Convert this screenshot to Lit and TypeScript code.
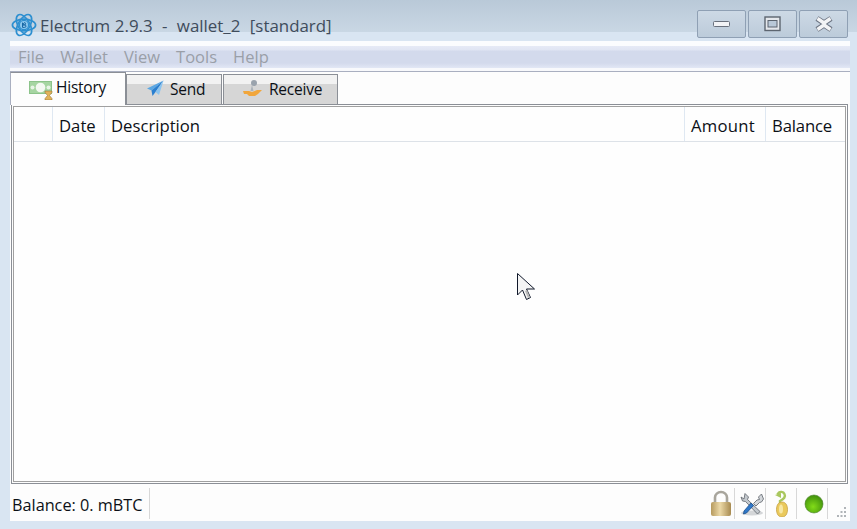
import { LitElement, html, css } from "lit";
import { customElement } from "lit/decorators.js";

@customElement("app-root")
export class AppRoot extends LitElement {
  static styles = css`
    :host { display: block; width: 857px; height: 529px; position: relative; overflow: hidden;
      font-family: "Open Sans", "Noto Sans", sans-serif; font-size: 15.5px; color: #0c1016; background: #d9e5f2; }
    .title { height: 41px; box-sizing: border-box; padding: 10px 9px 0 11px; display: flex; align-items: flex-start;
      background: linear-gradient(#b9c9d8 0, #c9d7e4 32px, #d9e5f2 32px); }
    .logo { width: 26px; height: 26px; margin-top: 2px; flex: none; }
    .caption { margin-left: 3px; margin-top: 5px; font-size: 16.9px; line-height: 22px; color: #3f4c5c; white-space: pre; word-spacing: .3px; }
    .winbtns { margin-left: auto; display: flex; gap: 2px; }
    .wb { width: 49px; height: 28px; box-sizing: border-box; border: 1px solid #8fa0b4; border-radius: 2px;
      background: linear-gradient(#cdd9e5, #bccbda); display: flex; align-items: center; justify-content: center; }
    .frame { height: 488px; box-sizing: border-box; padding: 0 7px 8px 10px; }
    .window { height: 100%; background: #fdfdfd; display: flex; flex-direction: column; }
    .menubar { height: 31px; flex: none; box-sizing: border-box; border-bottom: 1px solid #a9afc0;
      background: linear-gradient(#fbfcfe 0, #fbfcfe 5px, #e6eaf6 5px, #e0e5f3 9px, #d3daec 10px, #d3daec 22px, #e2e7f5 27px, #f8f9fc 27px);
      display: flex; gap: 16px; padding: 2px 0 0 8px; color: #9a9fa8; font-size: 16.5px; line-height: 27px; }
    .tabs { height: 32px; flex: none; display: flex; align-items: flex-end; letter-spacing: -.22px; }
    .tab { box-sizing: border-box; height: 30px; padding-bottom: 2px; display: flex; align-items: center; border: 1px solid #8b8f96;
      border-bottom: none; background: linear-gradient(#f2f2f2 0, #f2f2f2 9px, #d6d6d6 9px); white-space: nowrap; }
    .tab.active { height: 33px; width: 116px; background: #fdfdfd; border-left-color: #a9afc0;
      padding-left: 17px; padding-bottom: 4px; margin-bottom: -1px; position: relative; z-index: 1; }
    .tab.send { width: 96px; padding-left: 20px; margin-right: 1px; }
    .tab.receive { width: 115px; padding-left: 18px; }
    .tab svg { flex: none; }
    .i-hist { margin-right: 2px; margin-top: 5px; }
    .i-send { margin-right: 6px; }
    .i-recv { margin-right: 5px; }
    .pane { margin-left: 1px; margin-right: 2px; flex: none; height: 380px; box-sizing: border-box;
      border: 1px solid #8b8f96; padding: 1px; }
    .inner { height: 100%; box-sizing: border-box; border: 1px solid #a0a0a0; background: #fefefe; }
    .head { height: 35px; box-sizing: border-box; border-bottom: 1px solid #dde2e8; display: flex; font-size: 16.7px; }
    .col { box-sizing: border-box; padding: 5px 0 0 6px; border-right: 1px solid #dfe8f2; line-height: 28px; white-space: nowrap; }
    .c0 { width: 39px; }
    .c1 { width: 52px; }
    .c2 { width: 580px; }
    .c3 { width: 81px; letter-spacing: .25px; }
    .c4 { border: none; letter-spacing: -.15px; }
    .status { flex: 1; display: flex; align-items: flex-start; padding: 4px 0 0 2px; font-size: 16.25px; }
    .bal { width: 138px; height: 31px; line-height: 34px; border-right: 1px solid #d8d8d8; white-space: nowrap; box-sizing: border-box; }
    .icons { margin-left: auto; display: flex; align-items: center; }
    .sb { width: 31px; height: 31px; border-right: 1px solid #d8d8d8; display: flex; align-items: center; justify-content: center; box-sizing: border-box; }
    .sb.first { width: 26px; padding-left: 1px; justify-content: flex-start; }
    .sb.tools { padding-left: 3px; }
    .sb.seed { padding-left: 2px; }
    .sb.dot { padding-left: 4px; }
    .grip { width: 22px; height: 31px; display: flex; align-items: flex-end; }
    .cursor { position: absolute; left: 517px; top: 273px; }
  `;

  render() {
    return html`
      <div class="title">
        <svg class="logo" viewBox="0 0 26 26" fill="none" stroke="#2d8fd0" stroke-width="1.7">
          <ellipse cx="13" cy="13" rx="11.6" ry="5.8"/>
          <ellipse cx="13" cy="13" rx="11.6" ry="5.8" transform="rotate(60 13 13)"/>
          <ellipse cx="13" cy="13" rx="11.6" ry="5.8" transform="rotate(120 13 13)"/>
          <circle cx="13" cy="13" r="4.6" fill="#8cc8ee" stroke="#2d8fd0" stroke-width="1.2"/>
          <path d="M11.5 10.6v4.8h2.2a1.2 1.2 0 0 0 0-2.5h-2.2m0 0h1.9a1.1 1.1 0 0 0 0-2.3z" stroke="#1767a5" stroke-width="1"/>
        </svg>
        <span class="caption">Electrum 2.9.3  -  wallet_2  [standard]</span>
        <div class="winbtns">
          <div class="wb"><svg width="18" height="8"><rect x="0.5" y="1.5" width="16" height="5" rx="1" fill="#f2f3f6" stroke="#69707c"/></svg></div>
          <div class="wb"><svg width="17" height="16"><rect x="1" y="1" width="15" height="13.5" fill="#e4e7ec" stroke="#5d6570" stroke-width="1.4"/><rect x="4" y="4.5" width="9" height="6.5" fill="#b9c8d8" stroke="#5d6570"/></svg></div>
          <div class="wb"><svg width="20" height="16" viewBox="0 0 20 16"><path d="M3 2.500 10 7l7-4.500M3 13.500 10 9l7 4.500" stroke="#6a7280" stroke-width="5.500" fill="none"/><path d="M3.500 2.500 10 7l6.500-4.500M3.500 13.500 10 9l6.500 4.500M10 7v2" stroke="#f3f4f6" stroke-width="3.500" fill="none"/></svg></div>
        </div>
      </div>
      <div class="frame">
        <div class="window">
          <div class="menubar"><span>File</span><span>Wallet</span><span>View</span><span>Tools</span><span>Help</span></div>
          <div class="tabs">
            <div class="tab active">
              <svg class="i-hist" width="26" height="20" viewBox="0 0 26 20"><rect x="1" y="1" width="23" height="13" fill="#a6d5a2"/><rect x="1.500" y="1.500" width="22" height="12" fill="none" stroke="#8cc38a"/><circle cx="12.500" cy="7.500" r="4.800" fill="#f4f8f2"/><circle cx="4.500" cy="7.500" r="2" fill="#e8f4e6"/><circle cx="20.500" cy="7.500" r="2" fill="#e8f4e6"/><path d="M17 11h7v1.500l-2.500 3 2.500 3V20h-7v-1.500l2.500-3-2.500-3z" fill="#e2b35a" stroke="#8a6a30" stroke-width=".5"/></svg>
              History
            </div>
            <div class="tab send">
              <svg class="i-send" width="17" height="17" viewBox="0 0 17 17"><path d="M16.500.500 0 8.500l4.500 2z" fill="#5ba7e3"/><path d="M16.500.500 4.500 10.500 5.500 16 8.500 12z" fill="#2a7fd0"/><path d="M16.500.500 8.500 12l3.500 3z" fill="#8cc4ef"/></svg>
              Send
            </div>
            <div class="tab receive">
              <svg class="i-recv" width="22" height="20" viewBox="0 0 22 20"><circle cx="12" cy="4" r="3" fill="#9aa3ad"/><path d="M10 6l-1.500 6h3z" fill="#aab2ba"/><path d="M1 12h6l3 1 5-2h5l-4 4-3 2H7l-2-2H2z" fill="#f1a63c"/></svg>
              Receive
            </div>
          </div>
          <div class="pane">
            <div class="inner">
              <div class="head">
                <div class="col c0"></div>
                <div class="col c1">Date</div>
                <div class="col c2">Description</div>
                <div class="col c3">Amount</div>
                <div class="col c4">Balance</div>
              </div>
            </div>
          </div>
          <div class="status">
            <div class="bal">Balance: 0. mBTC</div>
            <div class="icons">
              <div class="sb first"><svg width="22" height="27" viewBox="0 0 22 27"><path d="M5 13V7.500a6 5.500 0 0 1 12 0V13" fill="none" stroke="#a8a59c" stroke-width="2.600"/><defs><linearGradient id="g" x1="0" x2="1"><stop offset="0" stop-color="#b69a5e"/><stop offset=".45" stop-color="#ecd9a8"/><stop offset="1" stop-color="#a78a50"/></linearGradient></defs><rect x="1" y="12" width="20" height="14" rx="2" fill="url(#g)"/></svg></div>
              <div class="sb tools"><svg width="24" height="24" viewBox="0 0 24 24"><ellipse cx="12" cy="21" rx="11" ry="2.500" fill="#d4d6d8"/><path d="M5 1.500 8.500 5l-1 2.500L20 19.500l-2.500 2.500L5.500 9.500 2.500 9 1 5l3 2z" fill="#c4c9ce" stroke="#6b7177" stroke-width=".9"/><path d="M21.500 2l-3 3 1 2.500-2.500.5-3.500 3.500 2.500 2.500 3.500-3.500 2-.5 2-3z" fill="#d3d7db" stroke="#6b7177" stroke-width=".9"/><path d="M11 11l2.500 2.500-7 7.500-3 1 .5-3z" fill="#2f78c9" stroke="#1c4f8d" stroke-width=".8"/></svg></div>
              <div class="sb seed"><svg width="18" height="27" viewBox="0 0 18 27"><path d="M7 13v-2c4-2 6-4 4.500-7-1-2.500-5-3-6.500-.5l2 1.500" fill="none" stroke="#a9c75e" stroke-width="2.400"/><path d="M2 5l6-2v5z" fill="#a9c75e"/><path d="M9 12c3.500 0 5.500 3 5.500 7.500S12.500 27 9 27s-5.500-3-5.500-7.500S5.500 12 9 12z" fill="#eac95c" stroke="#c09a3a" stroke-width=".7"/><ellipse cx="8" cy="19" rx="2" ry="4.500" fill="#f7e7a5"/></svg></div>
              <div class="sb dot"><svg width="20" height="20" viewBox="0 0 20 20"><defs><radialGradient id="r" cx=".45" cy=".65" r=".7"><stop offset="0" stop-color="#82dc18"/><stop offset="1" stop-color="#3b8a0c"/></radialGradient></defs><circle cx="10" cy="10" r="9" fill="url(#r)" stroke="#4a7f2a" stroke-width=".6"/></svg></div>
              <div class="grip"><svg width="22" height="12" viewBox="0 0 22 12" fill="#b0b4b8"><rect x="16" y="0" width="2" height="2"/><rect x="12.500" y="4" width="2" height="2"/><rect x="16" y="4" width="2" height="2"/><rect x="9" y="8" width="2" height="2"/><rect x="12.500" y="8" width="2" height="2"/><rect x="16" y="8" width="2" height="2"/></svg></div>
            </div>
          </div>
        </div>
      </div>
      <svg class="cursor" width="19" height="28" viewBox="0 0 19 28"><path d="M.5.500V22l5-5 4 9.500 4-2-4-8.500 8 0z" fill="#f4f4f4" stroke="#10182a"/><path d="M8 18l3 7 2-1-3-7z" fill="#b8b8b8"/></svg>
    `;
  }
}
